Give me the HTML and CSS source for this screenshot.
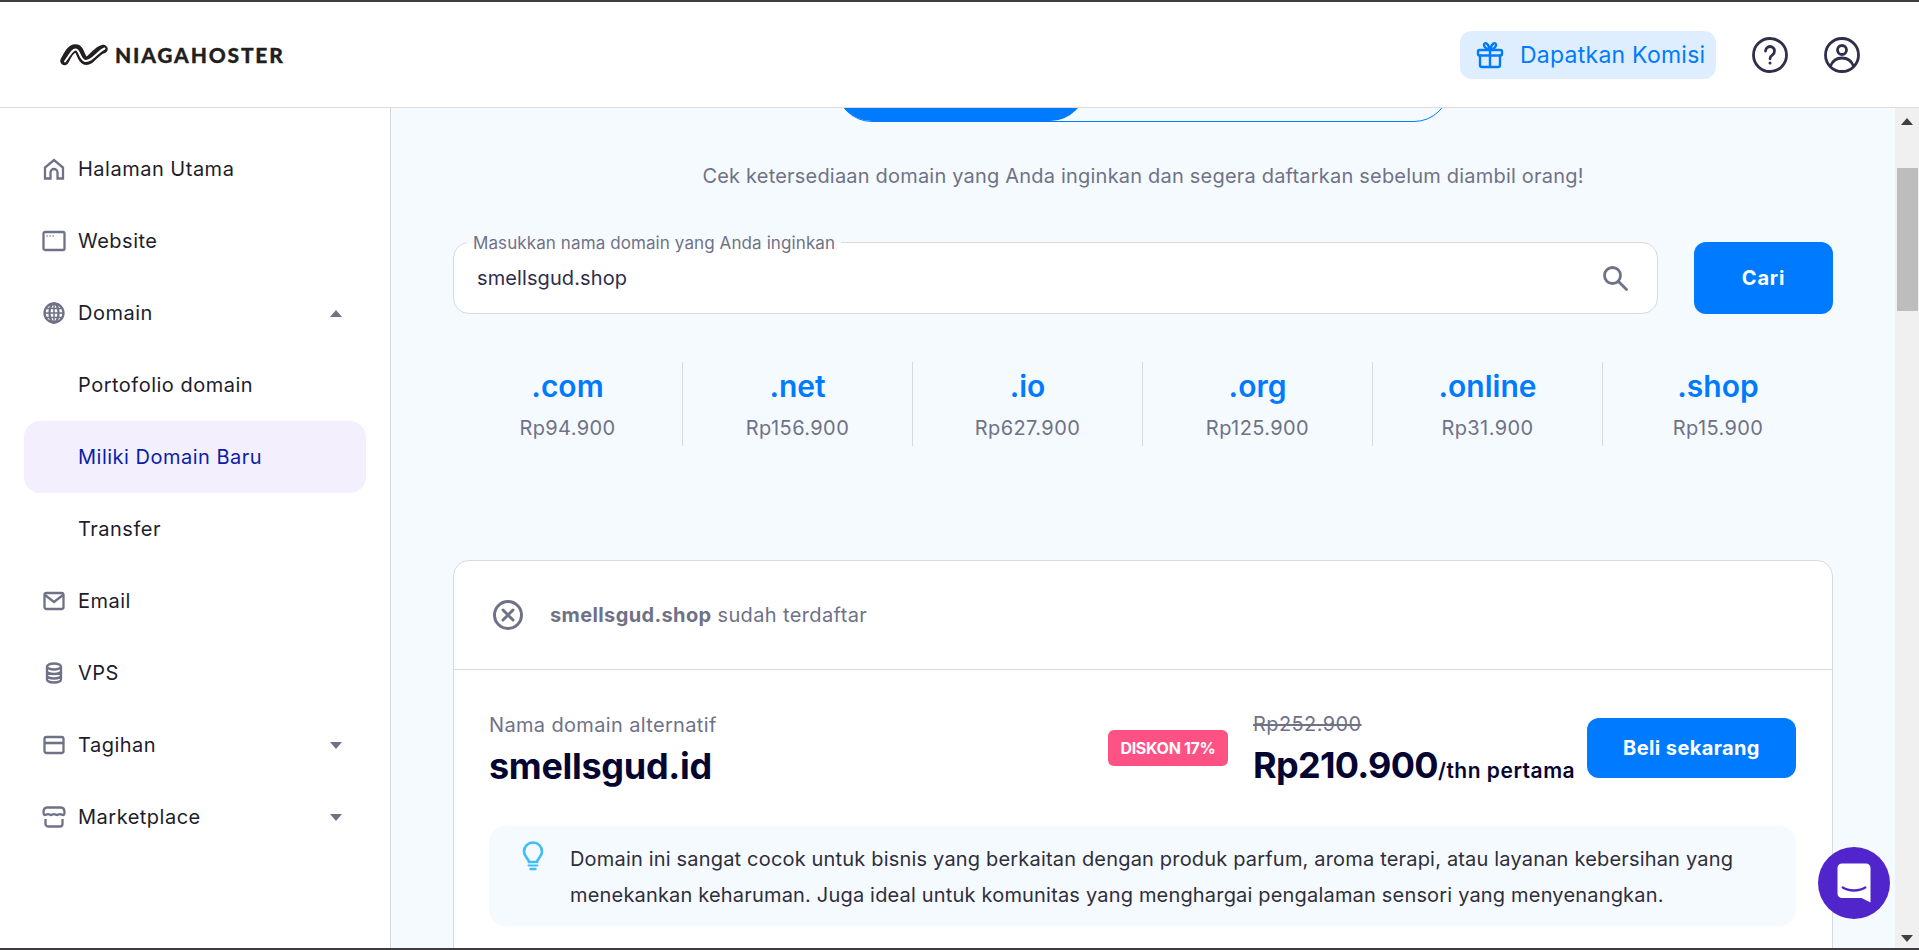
FILE: index.html
```html
<!DOCTYPE html>
<html lang="id">
<head>
<meta charset="utf-8">
<title>Niagahoster</title>
<link rel="stylesheet" href="styles.css">
</head>
<body>
<div class="app">
  <header class="topbar">
    <div class="logo">
      <svg class="logo-mark" viewBox="0 0 48 22" width="48" height="22" fill="none" stroke-linecap="round"><path d="M4.500 17C8 10 11 4.500 15.500 4.500C21 4.500 20 14 25 16.500C31 18.500 35 7 43.500 5" stroke="#231f20" stroke-width="8.500"/><path d="M5 17.500C11 9 12.500 5.500 15.500 5.500C20 5.500 19 15 25 17C32 18 37 8 44.500 4.500" stroke="#fff" stroke-width="2"/></svg>
      <span class="logo-text">NIAGAHOSTER</span>
    </div>
    <div class="top-actions">
      <a class="promo">
        <svg viewBox="0 0 28 28" width="28" height="28" fill="none" stroke="#007bff" stroke-width="2.400" stroke-linejoin="round" stroke-linecap="round"><rect x="2" y="9" width="24" height="5.500" rx="1.500"/><path d="M4 14.500V24a2 2 0 0 0 2 2h16a2 2 0 0 0 2-2v-9.500M14 9v17M14 9c-3-1-6-2-6-5 0-3 4-3 6 5zM14 9c3-1 6-2 6-5 0-3-4-3-6 5z"/></svg>
        <span>Dapatkan Komisi</span>
      </a>
      <svg class="top-icon" viewBox="0 0 36 36" width="36" height="36" fill="none" stroke="#2f2e4b" stroke-width="2.800" stroke-linecap="round"><circle cx="18" cy="18" r="16.500"/><path d="M13.500 14a4.500 4.500 0 1 1 7 3.800c-1.500 1-2.500 2-2.500 4"/><circle cx="18" cy="26" r="1.500" fill="#2f2e4b" stroke="none"/></svg>
      <svg class="top-icon" viewBox="0 0 36 36" width="36" height="36" fill="none" stroke="#2f2e4b" stroke-width="2.800"><circle cx="18" cy="18" r="16.500"/><circle cx="18" cy="13" r="4.500"/><path d="M6.500 29c2-5 6.500-8 11.500-8s9.500 3 11.500 8"/></svg>
    </div>
  </header>

  <div class="body">
    <nav class="sidebar">
      <a class="nav-item"><svg class="nav-icon" viewBox="0 0 24 24"><path d="M3 21.500V10.500L12 3l9 7.500v11h-5.500v-6a3.500 3.500 0 0 0-7 0v6z"/></svg><span>Halaman Utama</span></a>
      <a class="nav-item"><svg class="nav-icon" viewBox="0 0 24 24"><rect x="1.500" y="3" width="21" height="18" rx="1.500"/><path class="dots" d="M4.500 7h1.200M7.500 7h1.200M10.500 7h1.200"/></svg><span>Website</span></a>
      <a class="nav-item"><svg class="nav-icon" viewBox="0 0 24 24"><circle cx="12" cy="12" r="9.500"/><ellipse cx="12" cy="12" rx="4.500" ry="9.500"/><path d="M12 2.500v19M2.500 12h19M3.800 7.500h16.400M3.800 16.500h16.400" stroke-width="1.500"/></svg><span>Domain</span><i class="caret up"></i></a>
      <a class="nav-item"><span class="nav-indent">Portofolio domain</span></a>
      <a class="nav-item active"><span class="nav-indent">Miliki Domain Baru</span></a>
      <a class="nav-item"><span class="nav-indent">Transfer</span></a>
      <a class="nav-item"><svg class="nav-icon" viewBox="0 0 24 24"><rect x="2.500" y="4" width="19" height="16" rx="2"/><path d="M3 6l9 7 9-7"/></svg><span>Email</span></a>
      <a class="nav-item"><svg class="nav-icon" viewBox="0 0 24 24"><ellipse cx="12" cy="5.500" rx="7" ry="3"/><path d="M5 5.500v13c0 1.700 3 3 7 3s7-1.300 7-3v-13M5 10c0 1.700 3 3 7 3s7-1.300 7-3M5 14.500c0 1.700 3 3 7 3s7-1.300 7-3"/></svg><span>VPS</span></a>
      <a class="nav-item"><svg class="nav-icon" viewBox="0 0 24 24"><rect x="2.500" y="4" width="19" height="16" rx="2"/><path d="M2.500 10h19" stroke-width="2.600"/></svg><span>Tagihan</span><i class="caret"></i></a>
      <a class="nav-item"><svg class="nav-icon" viewBox="0 0 24 24"><path d="M5 2.500h14c2 0 3.500 2 3.500 5 0 1.500-.7 2.500-1.500 2.500-1 0-1.500-.8-3-.8s-2 .8-3 .8-1.500-.8-3-.8-1.500.8-3 .8-1.500-.8-3-.8-2 .8-3 .8c-.8 0-1.500-1-1.500-2.500 0-3 1.500-5 3.500-5zM3.500 14v5a2.500 2.500 0 0 0 2.500 2.500h12a2.500 2.500 0 0 0 2.500-2.500v-5"/></svg><span>Marketplace</span><i class="caret"></i></a>
    </nav>

    <main class="main">
      <div class="tabs"><div class="tab-on"></div></div>
      <p class="lead">Cek ketersediaan domain yang Anda inginkan dan segera daftarkan sebelum diambil orang!</p>

      <div class="search-row">
        <div class="field">
          <span class="field-label">Masukkan nama domain yang Anda inginkan</span>
          <span class="field-value">smellsgud.shop</span>
          <svg class="field-icon" viewBox="0 0 28 28" width="28" height="28" fill="none" stroke="#6f7287" stroke-width="2.800" stroke-linecap="round"><circle cx="11.500" cy="11.500" r="8"/><path d="M17.500 17.500l8 8"/></svg>
        </div>
        <button class="btn btn-search">Cari</button>
      </div>

      <div class="tlds">
        <div class="tld"><b>.com</b><span>Rp94.900</span></div>
        <div class="tld"><b>.net</b><span>Rp156.900</span></div>
        <div class="tld"><b>.io</b><span>Rp627.900</span></div>
        <div class="tld"><b>.org</b><span>Rp125.900</span></div>
        <div class="tld"><b>.online</b><span>Rp31.900</span></div>
        <div class="tld"><b>.shop</b><span>Rp15.900</span></div>
      </div>

      <section class="card">
        <div class="card-head">
          <svg viewBox="0 0 32 32" width="32" height="32" fill="none" stroke="#6f7287" stroke-width="3" stroke-linecap="round"><circle cx="16" cy="16" r="13.500"/><path d="M11 11l10 10M21 11L11 21"/></svg>
          <span><b>smellsgud.shop</b> sudah terdaftar</span>
        </div>
        <div class="card-body">
          <div class="offer">
            <div class="offer-name">
              <span class="offer-label">Nama domain alternatif</span>
              <strong>smellsgud.id</strong>
            </div>
            <span class="badge">DISKON 17%</span>
            <div class="price">
              <s>Rp252.900</s>
              <div class="price-now"><strong>Rp210.900</strong><em>/thn pertama</em></div>
            </div>
            <button class="btn btn-buy">Beli sekarang</button>
          </div>
          <div class="tip">
            <svg viewBox="0 0 24 32" width="24" height="32" fill="none" stroke="#3fbdfb" stroke-width="2.600" stroke-linecap="round"><path d="M8 21c0-3-5-5-5-10.500a9 9 0 0 1 18 0C21 16 16 18 16 21z"/><path d="M7.500 24.500h9" stroke-width="2"/><path d="M9.500 28h5" stroke-width="2.400"/></svg>
            <p>Domain ini sangat cocok untuk bisnis yang berkaitan dengan produk parfum, aroma terapi, atau layanan kebersihan yang menekankan keharuman. Juga ideal untuk komunitas yang menghargai pengalaman sensori yang menyenangkan.</p>
          </div>
        </div>
      </section>
      <a class="chat"><svg viewBox="0 0 24 28" width="36" height="42"><path d="M4 1h16a3 3 0 0 1 3 3v23l-6-3H4a3 3 0 0 1-3-3V4a3 3 0 0 1 3-3z" fill="#fff"/><path d="M4.500 17c4 2.600 11 2.600 15 0" fill="none" stroke="#5026cc" stroke-width="1.600" stroke-linecap="round"/></svg></a>
    </main>

    <div class="scrollbar">
      <i class="sb-arrow"></i>
      <div class="sb-thumb"></div>
      <i class="sb-arrow down"></i>
    </div>
  </div>
</div>
</body>
</html>
```
FILE: styles.css
```css
* { box-sizing: border-box; }
html, body { height: 100%; margin: 0; overflow: hidden; }
body {
  font-family: "Inter", "Liberation Sans", sans-serif;
  color: #1d1d2c;
  background: #fff;
}
.app {
  height: 950px;
  display: flex;
  flex-direction: column;
  border-top: 2px solid #3f3f3f;
  border-bottom: 2px solid #3f3b40;
}
.topbar {
  flex: 0 0 106px;
  display: flex;
  align-items: center;
  justify-content: space-between;
  padding: 0 59px 0 60px;
  border-bottom: 1px solid #dcdcdc;
  background: #fff;
}
.logo { display: flex; align-items: center; gap: 7px; }
.logo-text { font: 900 21px "Lato", sans-serif; color: #231f20; letter-spacing: 1.800px; -webkit-text-stroke: .3px #231f20; }
.top-actions { display: flex; align-items: center; gap: 36px; }
.promo {
  display: flex;
  align-items: center;
  gap: 16px;
  width: 256px;
  height: 48px;
  padding-left: 16px;
  border-radius: 12px;
  background: #deeeff;
  color: #007bff;
  font-size: 23px;
  letter-spacing: .25px;
  white-space: nowrap;
}
.body { flex: 1; display: flex; min-height: 0; }
.sidebar {
  flex: 0 0 391px;
  padding: 25px 24px 0;
  border-right: 1px solid #d5d8dc;
  background: #fff;
}
.nav-item {
  display: flex;
  align-items: center;
  height: 72px;
  padding: 0 19px 0 18px;
  border-radius: 16px;
  font-size: 20px;
  letter-spacing: .5px;
  color: #1d1d2c;
}
.nav-item.active { background: #f3effc; color: #0a1ea8; }
.nav-icon {
  flex: 0 0 24px;
  width: 24px;
  height: 24px;
  margin-right: 12px;
  fill: none;
  stroke: #6f7287;
  stroke-width: 2.300;
}
.nav-icon .dots { stroke-width: 1.600; }
.nav-indent { padding-left: 36px; }
.caret {
  margin-left: auto;
  margin-right: 5px;
  border-left: 6px solid transparent;
  border-right: 6px solid transparent;
  border-top: 7px solid #6f7287;
}
.caret.up { border-top: 0; border-bottom: 7px solid #6f7287; }
.main {
  flex: 1;
  position: relative;
  min-width: 0;
  padding: 0 62px;
  background: #f5faff;
  overflow: hidden;
}
.tabs {
  width: 614px;
  height: 72px;
  margin: -58px auto 0;
  border: 1px solid #007bff;
  border-radius: 36px;
}
.tab-on { width: 250px; height: 71px; margin: -1px 0 0 -1px; background: #007bff; border-radius: 36px; }
.lead {
  margin: 38px 0 0;
  text-align: center;
  font-size: 20px;
  line-height: 32px;
  letter-spacing: .2px;
  color: #6f7287;
}
.search-row { display: flex; gap: 36px; margin-top: 50px; }
.field {
  flex: 1;
  position: relative;
  display: flex;
  align-items: center;
  justify-content: space-between;
  height: 72px;
  padding: 0 28px 0 23px;
  background: #fff;
  border: 1px solid #d9dadd;
  border-radius: 16px;
}
.field-label {
  position: absolute;
  left: 13px;
  top: -10px;
  padding: 0 6px;
  font-size: 17px;
  line-height: 20px;
  letter-spacing: .1px;
  color: #6f7287;
  background: linear-gradient(#f5faff 50%, #fff 50%);
}
.field-value { font-size: 20px; color: #2f2e4b; letter-spacing: .1px; }
.btn {
  border: 0;
  color: #fff;
  background: #007bff;
  font-family: inherit;
  font-weight: 700;
  font-size: 20px;
}
.btn-search { flex: 0 0 139px; height: 72px; border-radius: 12px; letter-spacing: .8px; }
.tlds { display: grid; grid-template-columns: repeat(6, 1fr); margin-top: 48px; }
.tld {
  display: flex;
  flex-direction: column;
  align-items: center;
  height: 84px;
  border-right: 1px solid #d9dadd;
}
.tld:last-child { border-right: 0; }
.tld b { font-size: 30px; line-height: 44px; margin-top: 2px; font-weight: 600; color: #007bff; }
.tld span { font-size: 20px; line-height: 30px; margin-top: 5px; color: #6f7287; letter-spacing: .4px; }
.card {
  margin-top: 114px;
  background: #fff;
  border: 1px solid #d9dadd;
  border-radius: 16px 16px 0 0;
}
.card-head {
  display: flex;
  align-items: center;
  gap: 26px;
  height: 109px;
  padding: 0 38px;
  border-bottom: 1px solid #d9dadd;
  font-size: 20px;
  color: #6f7287;
  letter-spacing: .37px;
}
.card-body { padding: 42px 36px 40px 35px; }
.offer { display: flex; align-items: center; height: 72px; }
.offer-name { flex: 1; display: flex; flex-direction: column; align-self: flex-start; }
.offer-label { font-size: 20px; line-height: 26px; color: #6f7287; letter-spacing: .35px; }
.offer-name strong { font-size: 36px; line-height: 46px; margin-top: 5px; font-weight: 700; color: #050532; letter-spacing: -.3px; }
.badge {
  width: 120px;
  height: 36px;
  line-height: 36px;
  text-align: center;
  margin-right: 25px;
  border-radius: 6px;
  background: #ff5284;
  color: #fff;
  font-size: 16px;
  font-weight: 700;
  letter-spacing: -.3px;
}
.price { display: flex; flex-direction: column; width: 335px; align-self: flex-start; }
.price s { font-size: 20px; line-height: 24px; color: #6f7287; letter-spacing: .4px; }
.price-now { display: flex; align-items: baseline; height: 46px; margin-top: 6px; color: #050532; white-space: nowrap; }
.price-now strong { font-size: 36px; line-height: 46px; letter-spacing: -.7px; }
.price-now em { font-style: normal; font-weight: 600; font-size: 21px; letter-spacing: .5px; }
.btn-buy { width: 209px; height: 60px; margin-left: -1px; border-radius: 12px; letter-spacing: .4px; }
.tip {
  display: flex;
  gap: 25px;
  margin-top: 42px;
  padding: 15px 30px 13px 32px;
  background: #f5faff;
  border-radius: 16px;
}
.tip svg { flex: 0 0 24px; }
.tip p { margin: 0; font-size: 20px; line-height: 36px; color: #2f2e3b; letter-spacing: .18px; }
.chat {
  position: absolute;
  right: 5px;
  bottom: 29px;
  width: 72px;
  height: 72px;
  display: flex;
  align-items: center;
  justify-content: center;
  border-radius: 50%;
  background: #5026cc;
}
.scrollbar {
  flex: 0 0 24px;
  display: flex;
  flex-direction: column;
  align-items: center;
  justify-content: flex-start;
  background: #f0f0f0;
}
.sb-arrow {
  margin-top: 10px;
  border-left: 6px solid transparent;
  border-right: 6px solid transparent;
  border-bottom: 7px solid #404040;
}
.sb-arrow.down {
  margin-top: auto;
  margin-bottom: 6px;
  border-bottom: 0;
  border-top: 7px solid #404040;
}
.sb-thumb { width: 21px; height: 143px; margin-top: 43px; background: #bdbdbd; }
```
